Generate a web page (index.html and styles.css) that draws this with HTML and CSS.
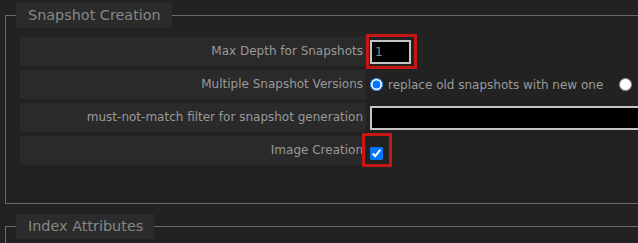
FILE: index.html
```html
<!DOCTYPE html>
<html>
<head>
<meta charset="utf-8">
<link rel="stylesheet" href="styles.css">
</head>
<body>
<fieldset class="group">
  <legend class="group-title">Snapshot Creation</legend>
  <div class="form-grid">
    <div class="label">Max Depth for Snapshots</div>
    <div class="value">
      <span class="highlight highlight-input"><input class="text-input small" type="text" value="1"></span>
    </div>

    <div class="label">Multiple Snapshot Versions</div>
    <div class="value">
      <input class="radio" type="radio" name="replace" checked>
      <span class="option-text">replace old snapshots with new one</span>
      <input class="radio radio-second" type="radio" name="replace">
      <span class="option-text">add new versions for each crawl</span>
    </div>

    <div class="label">must-not-match filter for snapshot generation</div>
    <div class="value">
      <input class="text-input wide" type="text" value="">
    </div>

    <div class="label">Image Creation</div>
    <div class="value value-top">
      <span class="highlight highlight-check"><input class="check" type="checkbox" checked></span>
    </div>
  </div>
</fieldset>

<fieldset class="group group-next">
  <legend class="group-title group-title-short">Index Attributes</legend>
  <div class="empty"></div>
</fieldset>
</body>
</html>
```

FILE: styles.css
```css
html, body {
  margin: 0;
  padding: 0;
  background: #222222;
  overflow: hidden;
}

body {
  font-family: "DejaVu Sans", sans-serif;
  font-size: 12px;
  color: #9a9a9a;
  width: 900px;
}

.group {
  margin: 3px 0 0 5px;
  width: 760px;
  border: 1px solid #6a6a6a;
  padding: 9px 0 38px 14px;
  min-inline-size: 0;
}

.group-next {
  margin-top: 10px;
  padding-bottom: 0;
}

.group-title {
  margin-left: -4px;
  padding: 0 11px 0 12px;
  height: 25px;
  line-height: 25px;
  font-size: 14.4px;
  color: #878787;
  background: #2b2b2b;
}

.form-grid {
  display: grid;
  grid-template-columns: 346px 1fr;
  grid-auto-rows: 29px;
  row-gap: 4px;
}

.label {
  background: #2a2a2a;
  text-align: right;
  padding-right: 3px;
  line-height: 29px;
  white-space: nowrap;
  color: #999999;
}

.value {
  display: flex;
  align-items: center;
  white-space: nowrap;
}

.value-top {
  align-items: flex-start;
}

.highlight {
  display: inline-flex;
  border: 3px solid #c81616;
}

.highlight-input {
  padding: 3px 3px 2px 1px;
  margin: -3px 0;
}

.highlight-check {
  margin: -3px 0 0 -4px;
  padding: 11px 6px 4px 5px;
}

.text-input {
  box-sizing: border-box;
  height: 24px;
  margin: 0;
  border: 2px solid #c4c4c4;
  background: #000000;
  color: #8a8a8a;
  font-family: "DejaVu Sans", sans-serif;
  font-size: 12px;
  padding: 0 3px;
  outline: none;
}

.small {
  width: 41px;
}

.wide {
  width: 320px;
  margin-left: 4px;
}

.radio {
  width: 13px;
  height: 13px;
  margin: 0 5px 0 4px;
}

.radio-second {
  margin-left: 16px;
}

.option-text {
  color: #9a9a9a;
}

.check {
  width: 13px;
  height: 13px;
  margin: 0;
}

.empty {
  height: 40px;
}
```
